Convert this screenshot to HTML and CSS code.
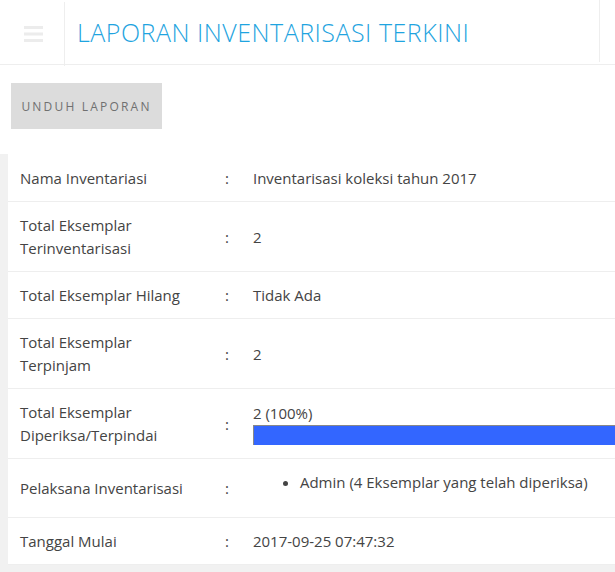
FILE: index.html
```html
<!DOCTYPE html>
<html>
<head>
<meta charset="utf-8">
<link rel="stylesheet" href="styles.css">
</head>
<body>
<header class="topbar">
  <div class="menu-btn">
    <svg width="19" height="16" viewBox="0 0 19 16"><rect x="0" y="0" width="19" height="3" fill="#ececec"/><rect x="0" y="6.5" width="19" height="3" fill="#ececec"/><rect x="0" y="13" width="19" height="3" fill="#ececec"/></svg>
  </div>
  <h1 class="title">LAPORAN INVENTARISASI TERKINI</h1>
  <div class="topbar-right"></div>
</header>
<div class="actions">
  <button class="btn">UNDUH LAPORAN</button>
</div>
<section class="report">
  <table class="info">
    <tr class="first"><td class="lbl">Nama Inventariasi</td><td class="sep">:</td><td class="val">Inventarisasi koleksi tahun 2017</td></tr>
    <tr><td class="lbl">Total Eksemplar Terinventarisasi</td><td class="sep">:</td><td class="val">2</td></tr>
    <tr><td class="lbl">Total Eksemplar Hilang</td><td class="sep">:</td><td class="val">Tidak Ada</td></tr>
    <tr><td class="lbl">Total Eksemplar Terpinjam</td><td class="sep">:</td><td class="val">2</td></tr>
    <tr><td class="lbl">Total Eksemplar Diperiksa/Terpindai</td><td class="sep">:</td><td class="val">2 (100%)<div class="bar"><div class="fill" style="width:100%"></div></div></td></tr>
    <tr><td class="lbl">Pelaksana Inventarisasi</td><td class="sep">:</td><td class="val"><ul class="people"><li>Admin (4 Eksemplar yang telah diperiksa)</li></ul></td></tr>
    <tr><td class="lbl">Tanggal Mulai</td><td class="sep">:</td><td class="val">2017-09-25 07:47:32</td></tr>
  </table>
</section>
</body>
</html>
```
FILE: styles.css
```css
html, body {
  margin: 0;
  padding: 0;
  background: #fff;
  font-family: "Open Sans", "Liberation Sans", sans-serif;
  color: #444;
  overflow: hidden;
}
.topbar {
  display: flex;
  height: 64px;
  border-bottom: 1px solid #eee;
}
.menu-btn {
  width: 65px;
  border-right: 1px solid #eee;
  padding: 26px 0 0 24px;
  box-sizing: border-box;
  margin-top: 2px;
  margin-bottom: -2px;
}
.menu-btn svg { display: block; margin-top: -2px; }
.title {
  flex: 1;
  margin: 0;
  padding-left: 12px;
  font-size: 25px;
  letter-spacing: 0.5px;
  font-weight: 300;
  color: #1fa4e0;
  line-height: 64px;
  white-space: nowrap;
}
.topbar-right {
  width: 15px;
  border-left: 1px solid #eee;
  margin-bottom: 2px;
}
.actions {
  padding: 18px 11px 25px;
}
.btn {
  display: block;
  background: #dcdcdc;
  border: 0;
  width: 151px;
  height: 46px;
  font-family: "Open Sans", "Liberation Sans", sans-serif;
  font-size: 12px;
  letter-spacing: 2.2px;
  color: #707070;
  padding: 0;
}
.report {
  background: #f1f1f1;
  padding-left: 8px;
  min-height: 420px;
}
.info {
  background: #fff;
  border-collapse: collapse;
  width: 640px;
  font-size: 15px;
  font-weight: 400;
  line-height: 23px;
}
.info td {
  padding: 12px 12px 11px;
  border-bottom: 1px solid #eee;
  vertical-align: middle;
}
.info tr.first td { padding-top: 13px; }
.info td.lbl { width: 181px; }
.info td.sep { width: 3px; }
.info .bar {
  height: 19px;
  border-left: 1px solid #888;
  border-top: 1px solid #888;
  background: #eee;
  margin-bottom: 2px;
}
.info .fill {
  height: 100%;
  background: #3366ff;
}
.people {
  margin: 0 0 12px;
  padding-left: 47px;
}
```
